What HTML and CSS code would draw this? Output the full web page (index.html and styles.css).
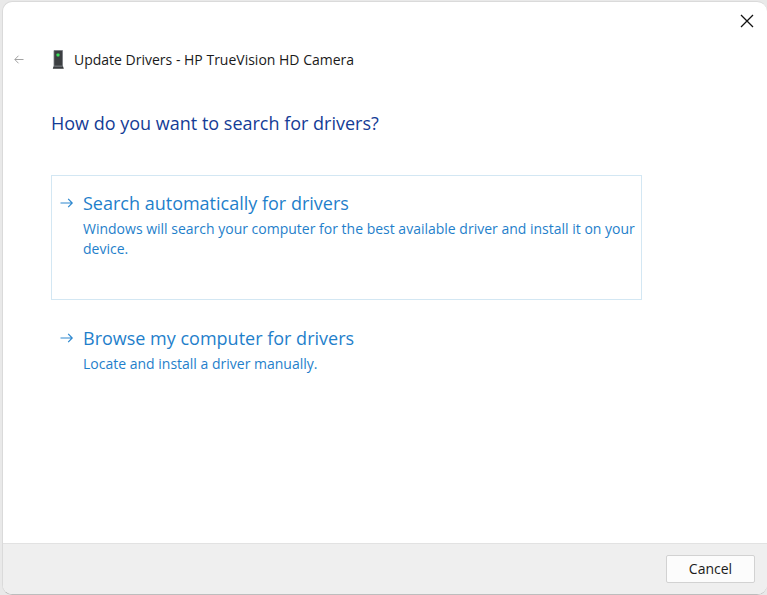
FILE: index.html
```html
<!DOCTYPE html>
<html lang="en">
<head>
<meta charset="utf-8">
<meta name="viewport" content="width=device-width, initial-scale=1">
<title>Update Drivers</title>
<link rel="stylesheet" href="styles.css">
</head>
<body>
<main class="window">
  <div class="titlebar">
    <button class="icon-button close" type="button" aria-label="Close">
      <svg width="14" height="14" viewBox="0 0 14 14"><path d="M1 1l12 12M13 1L1 13"/></svg>
    </button>
  </div>
  <header class="header">
    <button class="icon-button back" type="button" aria-label="Back">
      <svg width="10" height="10" viewBox="0 0 10 10"><path d="M9.500 4.500H1M4.500.700L.8 4.500l3.700 3.800"/></svg>
    </button>
    <svg class="device" width="12" height="20" viewBox="0 0 12 20">
      <path d="M2 .5h8.500v15.500H2z" fill="#3c3f42" stroke="#777b80" stroke-width=".8"/>
      <path d="M1.500 16.300h9.500l.8 2.500H.8z" fill="#34373a"/>
      <path d="M2.500 16.700h7.500" stroke="#777b80" stroke-width=".5"/>
      <rect x="4.500" y="3.500" width="3" height="3" rx=".8" fill="#3be05a"/>
    </svg>
    <span class="caption">Update Drivers - HP TrueVision HD Camera</span>
  </header>
  <section class="content">
    <h1 class="question">How do you want to search for drivers?</h1>
    <button class="option option-focused" type="button">
      <svg class="arrow" width="14" height="12" viewBox="0 0 14 12"><path d="M.5 6h11.500M8.200 1.800L12.200 6l-4 4.200"/></svg>
      <span class="option-text">
        <span class="option-title">Search automatically for drivers</span>
        <span class="option-note">Windows will search your computer for the best available driver and install it on your device.</span>
      </span>
    </button>
    <button class="option" type="button">
      <svg class="arrow" width="14" height="12" viewBox="0 0 14 12"><path d="M.5 6h11.500M8.200 1.800L12.200 6l-4 4.200"/></svg>
      <span class="option-text">
        <span class="option-title">Browse my computer for drivers</span>
        <span class="option-note">Locate and install a driver manually.</span>
      </span>
    </button>
  </section>
  <footer class="footer">
    <button class="cancel" type="button">Cancel</button>
  </footer>
</main>
</body>
</html>
```
FILE: styles.css
```css
* {
  box-sizing: border-box;
}

body {
  display: flex;
  min-height: 100vh;
  margin: 0;
  padding: 1px 0 0 2px;
  background: #e9e9e9;
  font-family: "Segoe UI", "Open Sans", "Noto Sans", sans-serif;
  font-size: 14px;
  line-height: 20px;
}

button {
  margin: 0;
  font: inherit;
}

.window {
  display: flex;
  flex: 1;
  flex-direction: column;
  overflow: hidden;
  border: 1px solid #dadada;
  border-right: 0;
  border-bottom-color: #bdbdbd;
  border-radius: 10px;
  background: #fff;
}

.titlebar {
  display: flex;
  justify-content: flex-end;
  padding: 7px 8px 0 0;
}

.icon-button {
  display: flex;
  align-items: center;
  justify-content: center;
  padding: 0;
  border: 0;
  background: none;
  fill: none;
}

.close {
  width: 24px;
  height: 24px;
  stroke: #111;
  stroke-width: 1.3;
}

.header {
  display: flex;
  align-items: center;
  padding: 17px 8px 0;
}

.back {
  width: 16px;
  height: 20px;
  margin-right: 25px;
  stroke: #a3a3a3;
  stroke-width: 1;
}

.device {
  margin-right: 10px;
}

.caption {
  color: #1a1a1a;
}

.content {
  flex: 1;
  padding: 39px 125px 16px 48px;
}

.question {
  margin: 0 0 38px;
  color: #143c96;
  font-size: 18px;
  font-weight: 400;
  line-height: 28px;
}

.option {
  display: flex;
  align-items: flex-start;
  width: 100%;
  min-height: 125px;
  padding: 13px 0 13px 8px;
  border: 1px solid transparent;
  background: none;
  color: #1f7fcb;
  text-align: left;
}

.option + .option {
  margin-top: 10px;
}

.option-focused {
  border-color: #d3e7f3;
}

.arrow {
  flex: none;
  margin: 8px 9px 0 0;
  fill: none;
  stroke: #2e88cf;
  stroke-width: 1.2;
}

.option-title,
.option-note {
  display: block;
}

.option-title {
  font-size: 18px;
  line-height: 28px;
}

.option-note {
  margin-top: 2px;
}

.footer {
  display: flex;
  justify-content: flex-end;
  padding: 11px 12px;
  border-top: 1px solid #e2e2e2;
  background: #efefef;
}

.cancel {
  width: 89px;
  height: 28px;
  padding: 0;
  border: 1px solid #d2d2d2;
  border-radius: 2px;
  background: #fcfcfc;
  color: #1a1a1a;
}
```
